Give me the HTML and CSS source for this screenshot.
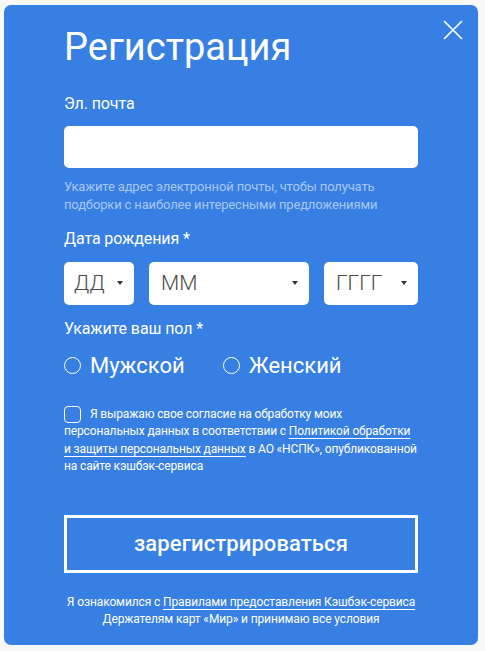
FILE: index.html
```html
<!DOCTYPE html>
<html lang="ru">
<head>
<meta charset="utf-8">
<title>Регистрация</title>
<link rel="stylesheet" href="styles.css">
</head>
<body>
<div class="modal">
  <button class="close" aria-label="Закрыть">
    <svg width="20" height="20" viewBox="0 0 20 20"><path d="M1 1 L19 19 M19 1 L1 19" stroke="#fff" stroke-width="1.7" fill="none"/></svg>
  </button>
  <h1 class="title">Регистрация</h1>
  <div class="label label-email">Эл. почта</div>
  <div class="input"></div>
  <p class="hint">Укажите адрес электронной почты, чтобы получать<br>подборки с наиболее интересными предложениями</p>
  <div class="label label-date">Дата рождения *</div>
  <div class="date-row">
    <div class="select sel-day"><span>ДД</span><i class="arrow"></i></div>
    <div class="select sel-month"><span>ММ</span><i class="arrow"></i></div>
    <div class="select sel-year"><span>ГГГГ</span><i class="arrow"></i></div>
  </div>
  <div class="label label-gender">Укажите ваш пол *</div>
  <div class="gender-row">
    <label class="radio"><span class="circle"></span>Мужской</label>
    <label class="radio"><span class="circle"></span>Женский</label>
  </div>
  <p class="consent"><span class="checkbox"></span>Я выражаю свое согласие на обработку моих<br>персональных данных в соответствии с <a href="#">Политикой обработки<br>и защиты персональных данных</a> в АО «НСПК», опубликованной<br>на сайте кэшбэк-сервиса</p>
  <button class="submit">зарегистрироваться</button>
  <p class="footer">Я ознакомился с <a href="#">Правилами предоставления Кэшбэк-сервиса</a><br>Держателям карт «Мир» и принимаю все условия</p>
</div>
</body>
</html>
```
FILE: styles.css
```css
* { box-sizing: border-box; }
html, body { margin: 0; padding: 0; }
body {
  background: #f8f8f8;
  font-family: Roboto, "Noto Sans", Arial, sans-serif;
  color: #fff;
}
.modal {
  position: relative;
  margin: 5px 7px 0 4px;
  width: 474px;
  height: 640px;
  background: #377fe2;
  border-radius: 7px;
  padding: 20px 60px 0 60px;
}
.close {
  position: absolute;
  top: 15px;
  right: 15px;
  width: 20px;
  height: 20px;
  padding: 0;
  border: 0;
  background: none;
  display: block;
}
.close svg { display: block; }
.title {
  margin: 0;
  font-size: 38px;
  line-height: 44px;
  font-weight: 400;
}
.label {
  font-size: 16px;
  line-height: 20px;
  letter-spacing: -0.1px;
}
.label-email { margin-top: 25px; }
.input {
  margin-top: 12px;
  height: 42px;
  background: #fff;
  border-radius: 5px;
}
.hint {
  margin: 10px 0 0;
  font-size: 13px;
  line-height: 17.5px;
  letter-spacing: -0.15px;
  color: #a9c7f3;
}
.label-date { margin-top: 16px; }
.date-row {
  margin-top: 12.5px;
  display: flex;
  gap: 15px;
}
.select {
  height: 43px;
  background: #fff;
  border-radius: 5px;
  display: flex;
  align-items: center;
  justify-content: space-between;
  padding: 0 11px 0 11px;
  color: #4a4a4a;
  font-size: 21px;
  font-weight: 300;
}
.sel-day { width: 70px; padding-left: 10px; }
.sel-month { width: 160px; padding-left: 12px; }
.sel-year { width: 94px; padding-left: 12px; }
.arrow {
  width: 0;
  height: 0;
  border-left: 3px solid transparent;
  border-right: 3px solid transparent;
  border-top: 4px solid #333;
}
.label-gender { margin-top: 14.5px; }
.gender-row {
  margin-top: 12.5px;
  display: flex;
  gap: 38px;
  font-size: 22px;
  line-height: 28px;
}
.radio {
  display: flex;
  align-items: center;
  gap: 9px;
}
.circle {
  width: 17px;
  height: 17px;
  border: 1.5px solid #fff;
  border-radius: 50%;
}
.consent {
  margin: 26.5px 0 0;
  font-size: 12px;
  line-height: 17.4px;
  letter-spacing: -0.14px;
  white-space: nowrap;
}
.checkbox {
  float: left;
  width: 17px;
  height: 17px;
  margin-right: 9px;
  border: 1.5px solid #fff;
  border-radius: 4px;
}
a {
  color: #fff;
  text-decoration: underline;
  text-underline-offset: 3px;
  text-decoration-thickness: 1px;
}
.submit {
  display: block;
  margin-top: 39px;
  width: 354px;
  height: 58px;
  border: 3px solid #fff;
  background: transparent;
  color: #fff;
  font-family: inherit;
  font-size: 22px;
  font-weight: 500;
  letter-spacing: 0.1px;
  padding: 0;
}
.footer {
  margin: 21px 0 0;
  font-size: 12px;
  line-height: 17.5px;
  letter-spacing: -0.12px;
  text-align: center;
  white-space: nowrap;
}
```
